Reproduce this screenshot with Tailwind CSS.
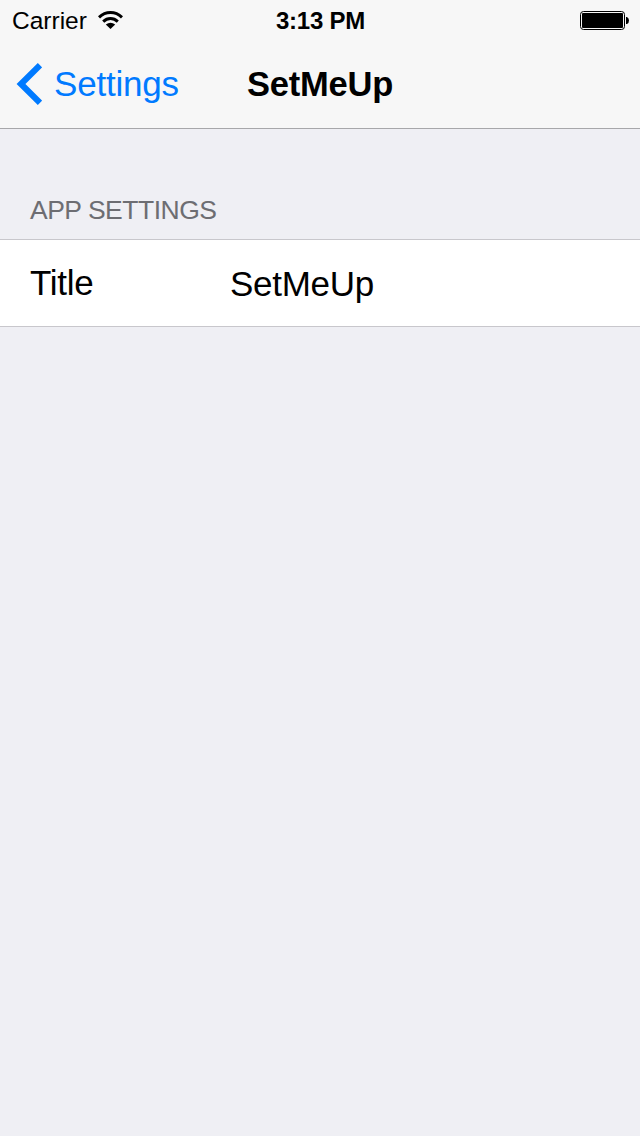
<!DOCTYPE html>
<html lang="en">
<head>
<meta charset="utf-8">
<title>SetMeUp</title>
<script src="https://cdn.jsdelivr.net/npm/@tailwindcss/browser@4"></script>
</head>
<body class="min-h-screen bg-[#efeff4] font-['Liberation_Sans',sans-serif] text-black">
<header class="h-[129px] border-b border-[#a7a7aa] bg-[#f7f7f7]">
  <div class="grid h-10 grid-cols-3 items-center pr-[11px] pl-3">
    <div class="flex items-center gap-[11px]">
      <span class="w-[75px] pt-[2px] text-[24.5px] leading-[38px] whitespace-nowrap">Carrier</span>
      <svg class="h-[18px] w-[25px]" viewBox="0 0 25 18" fill="none" stroke="black" stroke-width="3"><path d="M1 6.300Q6 1.500 12.500 1.500T24 6.300M5.200 10.600Q8.400 7.600 12.500 7.600T19.800 10.600"/><path d="M12.500 18L7.800 13.500Q12.500 10.200 17.200 13.500z" fill="black" stroke="none"/></svg>
    </div>
    <span class="justify-self-center pt-[2px] text-[24px] leading-[38px] font-bold tracking-[-0.25px] whitespace-nowrap">3:13 PM</span>
    <svg class="mt-[2px] h-5 w-[49px] justify-self-end" viewBox="0 0 49 20"><rect x=".5" y=".5" width="44" height="18" rx="3" fill="none" stroke="black"/><rect x="2" y="2" width="41" height="15" rx="1"/><path d="M46 6h1q2 1 2 3.500T47 13h-1z"/></svg>
  </div>
  <div class="grid h-[88px] grid-cols-[1fr_148px_1fr] items-center">
    <div class="flex items-center gap-3 pl-4 text-[#007aff]">
      <svg class="h-[42px] w-[26px]" viewBox="0 0 26 42" fill="none" stroke="currentColor" stroke-width="6.200"><path d="M24 2.200L5 21l19 18.800"/></svg>
      <span class="text-[35px] leading-[60px] tracking-[-0.2px]">Settings</span>
    </div>
    <h1 class="text-center text-[34.5px] leading-[60px] font-bold tracking-[-0.2px]">SetMeUp</h1>
  </div>
</header>
<main>
  <h2 class="flex h-[110px] items-end pb-[9px] pl-[30px] text-[26.5px] leading-10 tracking-[-0.5px] text-[#6d6d72]">APP SETTINGS</h2>
  <div class="flex h-[88px] border-y border-[#c8c7cc] bg-white pl-[30px] text-[35px] leading-[86px] tracking-[-0.3px]">
    <span class="w-[200px]">Title</span>
    <span class="pt-px">SetMeUp</span>
  </div>
</main>
</body>
</html>
